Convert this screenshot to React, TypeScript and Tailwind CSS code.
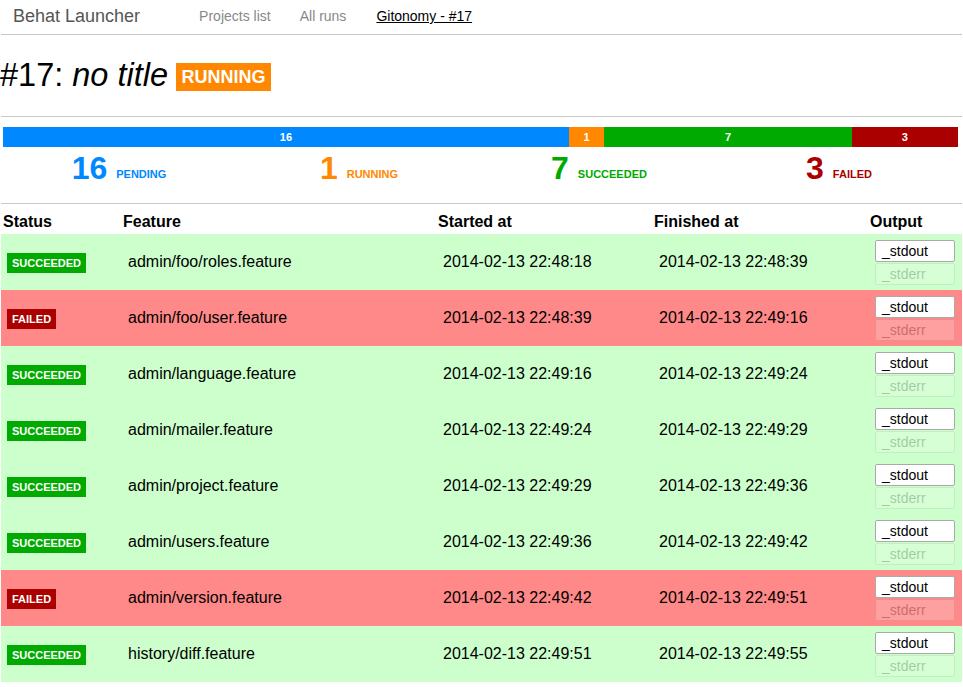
import React from 'react';

const rows = [
  { status: 'SUCCEEDED', feature: 'admin/foo/roles.feature', started: '2014-02-13 22:48:18', finished: '2014-02-13 22:48:39' },
  { status: 'FAILED', feature: 'admin/foo/user.feature', started: '2014-02-13 22:48:39', finished: '2014-02-13 22:49:16' },
  { status: 'SUCCEEDED', feature: 'admin/language.feature', started: '2014-02-13 22:49:16', finished: '2014-02-13 22:49:24' },
  { status: 'SUCCEEDED', feature: 'admin/mailer.feature', started: '2014-02-13 22:49:24', finished: '2014-02-13 22:49:29' },
  { status: 'SUCCEEDED', feature: 'admin/project.feature', started: '2014-02-13 22:49:29', finished: '2014-02-13 22:49:36' },
  { status: 'SUCCEEDED', feature: 'admin/users.feature', started: '2014-02-13 22:49:36', finished: '2014-02-13 22:49:42' },
  { status: 'FAILED', feature: 'admin/version.feature', started: '2014-02-13 22:49:42', finished: '2014-02-13 22:49:51' },
  { status: 'SUCCEEDED', feature: 'history/diff.feature', started: '2014-02-13 22:49:51', finished: '2014-02-13 22:49:55' },
];

const segments = [
  { count: 16, bg: 'bg-[#0088ff]' },
  { count: 1, bg: 'bg-[#ff8800]' },
  { count: 7, bg: 'bg-[#00aa00]' },
  { count: 3, bg: 'bg-[#aa0000]' },
];

const stats = [
  { count: 16, label: 'PENDING', color: 'text-[#0088ff]' },
  { count: 1, label: 'RUNNING', color: 'text-[#ff8800]' },
  { count: 7, label: 'SUCCEEDED', color: 'text-[#00aa00]' },
  { count: 3, label: 'FAILED', color: 'text-[#aa0000]' },
];

const cols = 'grid grid-cols-[120px_315px_216px_216px_1fr]';

export default function App() {
  return (
    <div className="min-h-[687px] bg-white text-black font-['Liberation_Sans',Arial,sans-serif]">
      {/* top nav */}
      <div className="flex items-center h-[35px] border-b border-[#c8c8c8] mx-[1px] pb-[1px]">
        <span className="ml-[12px] text-[18px] text-[#555]">Behat Launcher</span>
        <nav className="flex items-center text-[14px] ml-[59px] gap-[29px]">
          <span className="text-[#888]">Projects list</span>
          <span className="text-[#888]">All runs</span>
          <span className="underline text-black ml-[1px]">Gitonomy - #17</span>
        </nav>
      </div>

      {/* title */}
      <div className="flex items-center h-[82px] border-b border-[#c8c8c8] mx-[1px] pb-[1px]">
        <h1 className="text-[32.5px] leading-none -ml-[1px]">
          #17: <em>no title</em>
        </h1>
        <span className="ml-[8px] mt-[4px] bg-[#ff8800] text-white font-bold text-[18px] px-[5.5px] h-[28px] flex items-center">RUNNING</span>
      </div>

      {/* progress */}
      <div className="mx-[1px] border-b border-[#c8c8c8] pt-[10px] h-[87px]">
        <div className="flex h-[20px] w-[955px] ml-[2px]">
          {segments.map((s, i) => (
            <div
              key={i}
              className={`${s.bg} flex items-center justify-center text-white text-[11px] font-bold`}
              style={{ width: `${(s.count / 27) * 100}%` }}
            >
              {s.count}
            </div>
          ))}
        </div>
        <div className="grid grid-cols-4 w-[960px] -ml-[2px] mt-[3px]">
          {stats.map((s, i) => (
            <div key={i} className={`flex items-end justify-center gap-[9px] ${s.color}`}>
              <span className="text-[32px] font-bold leading-[36px]">{s.count}</span>
              <span className="text-[11px] font-bold mb-[4px]">{s.label}</span>
            </div>
          ))}
        </div>
      </div>

      {/* table */}
      <div className="mx-[1px]">
        <div className={`${cols} h-[30px] items-end text-[16px] leading-[24px] font-bold pl-[2px]`}>
          <div>Status</div>
          <div>Feature</div>
          <div>Started at</div>
          <div>Finished at</div>
          <div>Output</div>
        </div>
        {rows.map((r, i) => {
          const ok = r.status === 'SUCCEEDED';
          return (
            <div key={i} className={`${cols} h-[56px] items-center text-[16px] pl-[2px] ${ok ? 'bg-[#ccffcc]' : 'bg-[#ff8888]'}`}>
              <div className="pl-[4px]">
                <span className={`inline-flex items-center h-[20px] px-[5px] text-[11px] font-bold text-white ${ok ? 'bg-[#00aa00]' : 'bg-[#aa0000]'}`}>
                  {r.status}
                </span>
              </div>
              <div className="pl-[5px]">{r.feature}</div>
              <div className="pl-[5px]">{r.started}</div>
              <div className="pl-[5px]">{r.finished}</div>
              <div className="pl-[5px] flex flex-col gap-[1px]">
                <span className="w-[80px] h-[22px] bg-white border border-[#aaa] rounded-[2px] text-[14px] pl-[6px] leading-[20px]">_stdout</span>
                <span className="w-[80px] h-[22px] bg-white border border-[#aaa] rounded-[2px] text-[14px] pl-[6px] leading-[20px] opacity-20">_stderr</span>
              </div>
            </div>
          );
        })}
      </div>
    </div>
  );
}
